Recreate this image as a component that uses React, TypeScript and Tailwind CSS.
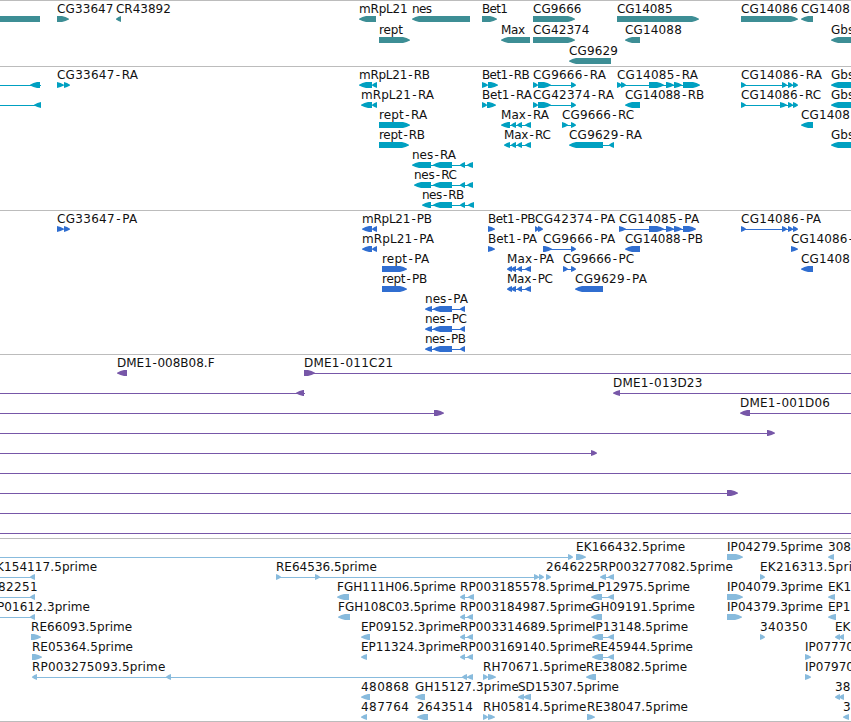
import React from 'react';

type Feature = {
  /** Left edge of the label, its text and (optionally) its right edge. */
  x: number;
  name: string;
  end?: number;
  /** Blocks: "r" points right, "l" points left, "b" is a plain bar. */
  blocks: [string, number, number][];
  /** Connecting intron line. */
  line?: [number, number];
};

type TrackData = { color: string; height: number; first: number; pitch: number; rows: Feature[][] };

// Parses "r10-20 l30-40 =10-40" into blocks and a connecting line.
function f(x: number, name: string, spec: string, end?: number): Feature {
  const out: Feature = { x, name, end, blocks: [] };
  spec.split(' ').filter(Boolean).forEach((part) => {
    const [a, b] = part.slice(1).split('-').map(Number);
    if (part[0] === '=') out.line = [a, b];
    else out.blocks.push([part[0], a, b]);
  });
  return out;
}

const longExon = 'r649-664 r666-674 r674-682';
const nesTail = 'l433-452 l460-465';

const tracks: TrackData[] = [
  {
    color: '#3d8e95', height: 66, first: 16, pitch: 21,
    rows: [
      [f(0, '', 'b0-40'), f(57, 'CG33647', 'r57-69', 113.5), f(116, 'CR43892', 'l116-121', 170.8), f(359, 'mRpL21', 'l359-376', 407.6), f(412, 'nes', 'l412-470', 432), f(482, 'Bet1', 'r482-497', 508), f(533, 'CG9666', 'r533-575', 581.5), f(617, 'CG14085', 'r617-699', 672.6), f(741, 'CG14086', 'r741-798', 797.8), f(801, 'CG1408', 'l801-813', 849.8)],
      [f(379, 'rept', 'r379-410', 403), f(501, 'Max', 'l501-530', 525), f(533, 'CG42374', 'r533-575', 589.5), f(625, 'CG14088', 'l625-640', 681.8), f(831, 'Gbs', 'l831-870')],
      [f(569, 'CG9629', 'l569-611', 617.8)],
    ],
  },
  {
    color: '#00a0c1', height: 144, first: 16, pitch: 20,
    rows: [
      [f(0, '', 'l30-40 =0-41'), f(57, 'CG33647-RA', 'r57-64 r64-70', 138), f(359, 'mRpL21-RB', 'l359-372 l372-377', 430), f(482, 'Bet1-RB', 'r482-488 r488-498', 529.8), f(533, 'CG9666-RA', 'r533-538 r538-551 r571-576 =538-571', 606), f(617, 'CG14085-RA', `r617-622 r621-626 ${longExon} r683-700 =621-685`, 698), f(741, 'CG14086-RA', 'r741-746 r782-787 r788-793 r793-798 =741-793', 822), f(831, 'Gbs', 'l831-870')],
      [f(0, '', 'l34-41 =0-36'), f(361, 'mRpL21-RA', 'l361-372 l372-377', 434), f(482, 'Bet1-RA', 'r482-487 r487-496', 532), f(533, 'CG42374-RA', 'r533-538 r538-551 r571-576 =538-571', 614), f(625, 'CG14088-RB', 'l625-640', 704.2), f(741, 'CG14086-RC', 'r741-746 r780-787 r788-793 r793-798 =741-793', 821.2), f(831, 'Gbs', 'l831-870')],
      [f(379, 'rept-RA', 'r379-410', 427.3), f(501, 'Max-RA', 'l501-510 l511-516 l517-522 l525-531 =505-528', 549), f(562, 'CG9666-RC', 'r562-568 r571-576 =564-573', 634.2), f(801, 'CG1408', 'l801-813', 849.8)],
      [f(379, 'rept-RB', 'r379-409', 425), f(504, 'Max-RC', 'l504-510 l511-516 l517-522 l525-531 =505-528', 551), f(569, 'CG9629-RA', 'l569-603 l609-614 =603-610', 642), f(831, 'Gbs', 'l831-870')],
      [f(412, 'nes-RA', `l412-431 ${nesTail} l467-473 =430-468`, 456)],
      [f(414, 'nes-RC', `l414-431 ${nesTail} l467-473 =430-468`, 457)],
      [f(422, 'nes-RB', `l422-431 ${nesTail} l468-474 =430-469`, 464.2)],
    ],
  },
  {
    color: '#306ed0', height: 144, first: 16, pitch: 20,
    rows: [
      [f(57, 'CG33647-PA', 'r57-64 r64-70', 137.2), f(362, 'mRpL21-PB', 'l362-372 l372-377', 432), f(488, 'Bet1-PB', 'r488-495', 535.6), f(535, 'CG42374-PA', 'r535-539 r538-543', 615.2), f(619, 'CG14085-PA', `r619-626 ${longExon} r683-696 =621-685`, 699.2), f(741, 'CG14086-PA', 'r741-746 r782-787 r788-793 r793-798 =741-793', 821)],
      [f(362, 'mRpL21-PA', 'l362-372 l372-377', 434), f(488, 'Bet1-PA', 'r488-495', 537), f(543, 'CG9666-PA', 'r543-552 r571-576 =548-573', 615.2), f(625, 'CG14088-PB', 'l625-640', 703), f(791, 'CG14086-', 'r791-798', 853)],
      [f(382, 'rept-PA', 'r382-407', 429.2), f(507, 'Max-PA', 'l507-512 l511-516 l517-522 l525-531 =508-528', 554), f(563, 'CG9666-PC', 'r563-568 r571-576 =564-573', 634.2), f(801, 'CG1408', 'l801-813', 849.8)],
      [f(382, 'rept-PB', 'r382-407', 427.2), f(507, 'Max-PC', 'l507-512 l511-516 l517-522 l525-531 =508-528', 553), f(575, 'CG9629-PA', 'l575-603', 647)],
      [f(425, 'nes-PA', `l425-432 ${nesTail} =428-463`, 468)],
      [f(425, 'nes-PC', `l425-432 ${nesTail} =428-463`, 467)],
      [f(425, 'nes-PB', `l425-432 ${nesTail} =428-463`, 466)],
    ],
  },
  {
    color: '#7757a8', height: 184, first: 16, pitch: 20,
    rows: [
      [f(117, 'DME1-008B08.F', 'l117-127', 214.6), f(304, 'DME1-011C21', 'r304-315 =310-851', 393.2)],
      [f(0, '', 'l296-304 =0-305'), f(613, 'DME1-013D23', 'l613-620 =615-851', 702.3)],
      [f(0, '', 'r434-444 =0-440'), f(740, 'DME1-001D06', 'l740-750 =745-851', 830)],
      [f(0, '', 'r767-775 =0-770')],
      [f(0, '', 'r591-597 =0-595')],
      [f(0, '', '=0-851')],
      [f(0, '', 'r727-738 =0-735')],
      [f(0, '', '=0-851')],
      [f(0, '', '=0-851')],
    ],
  },
  {
    color: '#88bbdd', height: 183, first: 16, pitch: 20,
    rows: [
      [f(0, '', 'r568-573 =0-570'), f(576, 'EK166432.5prime', 'r576-586', 685.2), f(727, 'IP04279.5prime', 'r727-743', 823), f(828, '308', 'l828-834')],
      [f(-4, 'K154117.5prime', 'l30-35 =0-32', 97.2), f(276, 'RE64536.5prime', 'r276-281 r315-320 r534-539 r539-544 =276-541', 376.8), f(546, '2646225', 'r546-551', 600.5), f(600, 'RP003277082.5prime', 'l600-606 l608-614 =603-611', 733), f(760, 'EK216313.5pri', 'r760-765', 852)],
      [f(-2, '82251', 'l30-35 =0-32', 37.7), f(337, 'FGH111H06.5prime', 'l337-349', 456), f(460, 'RP003185578.5prime', 'l460-465 l468-474 =462-470', 593), f(591, 'LP12975.5prime', 'l591-602 l608-614 =600-611', 690), f(727, 'IP04079.3prime', 'r727-743', 823), f(828, 'EK1', 'l828-835')],
      [f(-3, 'P01612.3prime', 'l30-35 =0-32', 90), f(338, 'FGH108C03.5prime', 'l338-350', 456), f(460, 'RP003184987.5prime', 'l460-465 l467-473 =462-470', 593), f(591, 'GH09191.5prime', 'l591-602', 695), f(727, 'IP04379.3prime', 'r727-742', 823), f(828, 'EP1', 'l828-836')],
      [f(31, 'RE66093.5prime', 'r31-41', 132.2), f(361, 'EP09152.3prime', 'l361-370', 460.5), f(460, 'RP003314689.5prime', 'l460-465 l467-473 =462-470', 593), f(592, 'IP13148.5prime', 'l592-603 l608-614 =600-611', 688.2), f(760, '340350', 'r760-765', 807.7), f(835, 'EK', 'l835-840 l839-844')],
      [f(32, 'RE05364.5prime', 'r32-42', 133), f(361, 'EP11324.3prime', 'l361-367', 460.5), f(460, 'RP003169140.5prime', 'l460-465 l467-473 =462-470', 593), f(592, 'RE45944.5prime', 'l592-603 l608-614 =600-611', 693), f(805, 'IP07770', 'r805-811')],
      [f(32, 'RP003275093.5prime', 'l32-37 l166-171 l462-467 l467-473 =35-470', 165.3), f(483, 'RH70671.5prime', 'r483-488 r488-496', 586.5), f(586, 'RE38082.5prime', 'l586-596', 687.2), f(805, 'IP07970', 'r805-811')],
      [f(361, '480868', 'l361-370', 409), f(415, 'GH15127.3prime', 'l415-425', 519), f(518, 'SD15307.5prime', 'l518-524 l523-531', 619), f(835, '38', 'l835-840 l839-844')],
      [f(361, '487764', 'l361-367', 409), f(417, '2643514', 'l417-428', 472.8), f(483, 'RH05814.5prime', 'r483-488 r488-495', 586.5), f(587, 'RE38047.5prime', 'r587-595', 688), f(843, '3', 'l843-849')],
    ],
  },
];

function Block({ kind, a, b, y }: { kind: string; a: number; b: number; y: number }) {
  if (kind === 'b') return <rect x={a} y={y} width={b - a} height={6} />;
  const head = Math.min(7, b - a);
  const tip = kind === 'r' ? b : a;
  const back = kind === 'r' ? a : b;
  const dir = kind === 'r' ? 1 : -1;
  const neck = tip - dir * head;
  const mid = tip - dir * head * 0.5;
  return (
    <polygon
      points={`${back},${y} ${neck},${y} ${mid},${y + 1} ${tip},${y + 2.8} ${tip},${y + 3.4} ${mid},${y + 5} ${neck},${y + 6} ${back},${y + 6}`}
    />
  );
}

function Label({ item, y }: { item: Feature; y: number }) {
  const dash = item.name.indexOf('-');
  // The dash sits in a wider cell than the font gives it.
  const pad = item.name.startsWith('DME') ? 0.6 : 1.3;
  return (
    <text
      x={item.x}
      y={y}
      textLength={item.end ? item.end - item.x : undefined}
      className="fill-[#111111] text-[12px]"
    >
      {dash < 0 ? (
        item.name
      ) : (
        <>
          {item.name.slice(0, dash)}
          <tspan dx={pad}>-</tspan>
          {dash < item.name.length - 1 && <tspan dx={pad}>{item.name.slice(dash + 1)}</tspan>}
        </>
      )}
    </text>
  );
}

function Track({ track }: { track: TrackData }) {
  return (
    <section className="border-t border-[#bcbcbc]">
      <svg width={851} height={track.height - 1} className="block overflow-hidden" fill={track.color}>
        {track.rows.map((row, i) => {
          // The section's top border takes the first pixel row of the track.
          const y = track.first - 1 + i * track.pitch;
          return (
            <g key={i}>
              {row.map((item, j) => (
                <g key={j}>
                  {item.line && <rect x={item.line[0]} y={y + 3} width={item.line[1] - item.line[0]} height={1} />}
                  {item.blocks.map(([kind, a, b], k) => (
                    <Block key={k} kind={kind} a={a} b={b} y={y} />
                  ))}
                  {item.name && <Label item={item} y={y - 3} />}
                </g>
              ))}
            </g>
          );
        })}
      </svg>
    </section>
  );
}

export default function App() {
  return (
    <main className="h-[722px] w-[851px] overflow-hidden border-b border-[#bcbcbc] bg-white font-['DejaVu_Sans',sans-serif]">
      {tracks.map((track, i) => (
        <Track key={i} track={track} />
      ))}
    </main>
  );
}
